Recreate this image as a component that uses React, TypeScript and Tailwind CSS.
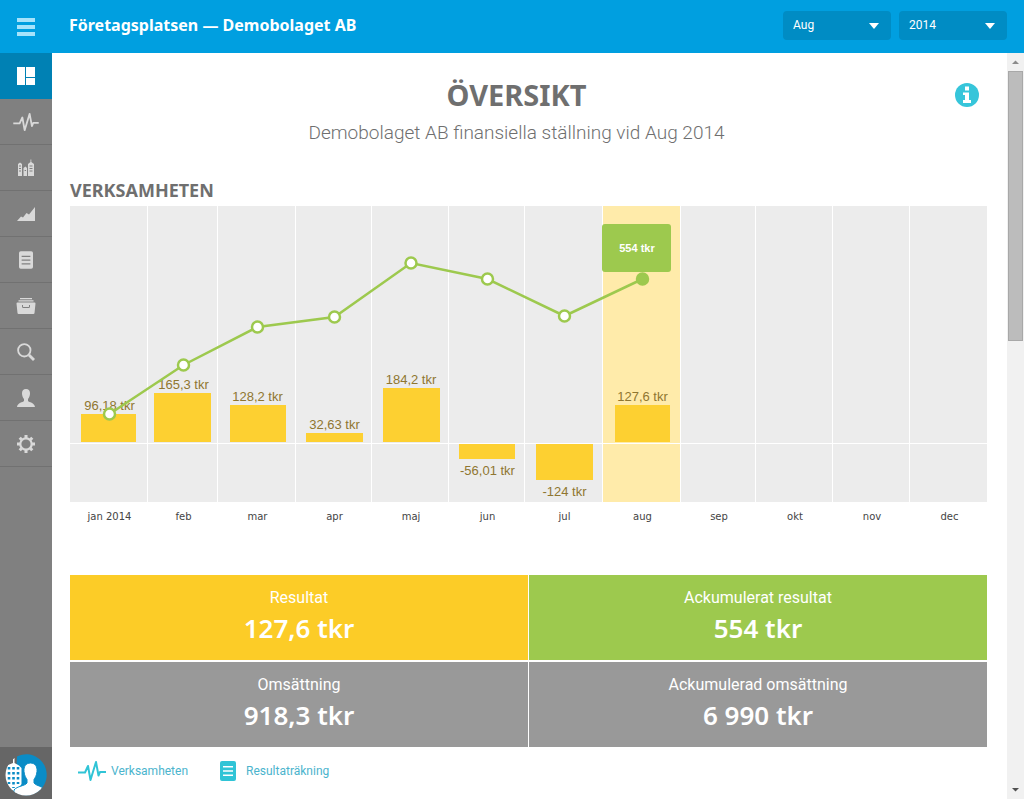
import { useState } from 'react';
import type { ReactNode } from 'react';
import clsx from 'clsx';

interface Month {
  name: string;
  start: number;
  end: number;
  result?: string;
  bar?: { x: number; y: number; width: number; height: number };
  total?: number;
}

const ZERO_Y = 237;
const PLOT_HEIGHT = 296;

const months: Month[] = [
  { name: 'jan 2014', start: 0, end: 77, result: '96,18 tkr', bar: { x: 11, y: 208, width: 55, height: 28 }, total: 208 },
  { name: 'feb', start: 78, end: 147, result: '165,3 tkr', bar: { x: 84, y: 187, width: 57, height: 49 }, total: 159 },
  { name: 'mar', start: 148, end: 225, result: '128,2 tkr', bar: { x: 160, y: 199, width: 56, height: 37 }, total: 121 },
  { name: 'apr', start: 226, end: 301, result: '32,63 tkr', bar: { x: 236, y: 227, width: 57, height: 9 }, total: 111 },
  { name: 'maj', start: 302, end: 378, result: '184,2 tkr', bar: { x: 313, y: 182, width: 57, height: 54 }, total: 57 },
  { name: 'jun', start: 379, end: 454, result: '-56,01 tkr', bar: { x: 389, y: 238, width: 56, height: 15 }, total: 73 },
  { name: 'jul', start: 455, end: 532, result: '-124 tkr', bar: { x: 466, y: 238, width: 57, height: 36 }, total: 110 },
  { name: 'aug', start: 533, end: 610, result: '127,6 tkr', bar: { x: 545, y: 199, width: 55, height: 37 }, total: 73 },
  { name: 'sep', start: 611, end: 685 },
  { name: 'okt', start: 686, end: 762 },
  { name: 'nov', start: 763, end: 839 },
  { name: 'dec', start: 840, end: 917 },
];

const center = (m: Month) => (m.start + m.end) / 2 + 1;

function PulseIcon({ className }: { className?: string }) {
  return (
    <svg viewBox="0 0 28 22" className={className} fill="none" stroke="currentColor" strokeWidth="2" strokeLinejoin="round" aria-hidden="true">
      <path d="M0 12.500H7L10 6L12.500 20L18 2L20.500 15.500L22 12H28" />
    </svg>
  );
}

function DocumentIcon({ className }: { className?: string }) {
  return (
    <svg viewBox="0 0 16 20" className={className} aria-hidden="true">
      <path
        fill="currentColor"
        fillRule="evenodd"
        d="M2 0H14A2 2 0 0 1 16 2V18A2 2 0 0 1 14 20H2A2 2 0 0 1 0 18V2A2 2 0 0 1 2 0ZM3 5V6.500H13V5ZM3 9.300V10.800H13V9.300ZM3 13.600V15.100H13V13.600Z"
      />
    </svg>
  );
}

const navItems: { label: string; icon: ReactNode }[] = [
  {
    label: 'Översikt',
    icon: (
      <svg viewBox="0 0 18 18" className="w-[18px] h-[18px]" fill="currentColor">
        <path d="M0 0H8V18H0ZM9 0H18V10H9ZM9 11H18V18H9Z" />
      </svg>
    ),
  },
  { label: 'Verksamheten', icon: <PulseIcon className="w-[26px] h-5" /> },
  {
    label: 'Bransch',
    icon: (
      <svg viewBox="0 0 18 18" className="w-[18px] h-[18px]" fill="currentColor">
        <path
          fillRule="evenodd"
          d="M1 17V5L3 3.500L5 5V17ZM6.500 17V9L8.500 7.500L10 9V17ZM11 17V5L13.500 3L13.500 0.500H14.300V3L17 5V17ZM2 6.500V7.500H4V6.500ZM2 9V10H4V9ZM2 11.500V12.500H4V11.500ZM12.500 6.500V7.500H15.500V6.500ZM12.500 9V10H15.500V9ZM12.500 11.500V12.500H15.500V11.500ZM7.600 11V12H9V11Z"
        />
      </svg>
    ),
  },
  {
    label: 'Utveckling',
    icon: (
      <svg viewBox="0 0 18 18" className="w-[18px] h-[18px]" fill="currentColor">
        <path d="M0 16L4 11.500L6 12.500L9.500 8L12 9.500L18 2V16Z" />
      </svg>
    ),
  },
  { label: 'Resultaträkning', icon: <DocumentIcon className="w-[14px] h-[18px]" /> },
  {
    label: 'Arkiv',
    icon: (
      <svg viewBox="0 0 20 18" className="w-5 h-[18px]" fill="currentColor">
        <path d="M4 1H16V2.200H4ZM2.500 3.200H17.500V4.500H2.500Z" />
        <path
          fillRule="evenodd"
          d="M0.500 6.500Q0.500 5.500 1.500 5.500H18.500Q19.500 5.500 19.500 6.500L18.500 16Q18.400 17 17.400 17H2.600Q1.600 17 1.500 16ZM6 8V9.500Q6 11 7.500 11H12.500Q14 11 14 9.500V8H13V9.500Q13 10 12.500 10H7.500Q7 10 7 9.500V8Z"
        />
      </svg>
    ),
  },
  {
    label: 'Sök',
    icon: (
      <svg viewBox="0 0 18 18" className="w-[18px] h-[18px]" fill="none" stroke="currentColor">
        <circle cx="7.300" cy="7.300" r="6.200" strokeWidth="1.800" />
        <path d="M12 12L17 17" strokeWidth="2.800" />
      </svg>
    ),
  },
  {
    label: 'Användare',
    icon: (
      <svg viewBox="0 0 18 18" className="w-[18px] h-[18px]" fill="currentColor">
        <path d="M9 0C11.700 0 13.200 2 13 4.800C12.900 7 12 9 11 10V12C12 13.400 17.500 13.600 18 18H0C0.500 13.600 6 13.400 7 12V10C6 9 5.100 7 5 4.800C4.800 2 6.300 0 9 0Z" />
      </svg>
    ),
  },
  {
    label: 'Inställningar',
    icon: (
      <svg viewBox="0 0 18 18" className="w-[18px] h-[18px]" fill="none" stroke="currentColor">
        <circle cx="9" cy="9" r="5.700" strokeWidth="2.200" />
        <path
          strokeWidth="3"
          d="M9 0V3M9 15V18M0 9H3M15 9H18M2.700 2.700L4.800 4.800M13.200 13.200L15.300 15.300M2.700 15.300L4.800 13.200M13.200 4.800L15.300 2.700"
        />
      </svg>
    ),
  },
];

const tiles = [
  { label: 'Resultat', value: '127,6 tkr', color: 'bg-[#fccc27]' },
  { label: 'Ackumulerat resultat', value: '554 tkr', color: 'bg-[#9dc94e]' },
  { label: 'Omsättning', value: '918,3 tkr', color: 'bg-[#999999]' },
  { label: 'Ackumulerad omsättning', value: '6 990 tkr', color: 'bg-[#999999]' },
];

interface PeriodSelectProps {
  label: string;
  value: string;
  options: string[];
  onChange: (value: string) => void;
}

function PeriodSelect({ label, value, options, onChange }: PeriodSelectProps) {
  return (
    <div className="relative">
      <select
        aria-label={label}
        value={value}
        onChange={(e) => onChange(e.target.value)}
        className="block appearance-none w-[108px] h-[29px] pl-[10px] pr-8 rounded-sm bg-[#008cc4] text-white text-[12px]"
      >
        {options.map((option) => (
          <option key={option}>{option}</option>
        ))}
      </select>
      <svg viewBox="0 0 10 6" className="absolute right-3 top-3 w-[10px] h-[6px] pointer-events-none" aria-hidden="true">
        <path d="M0 0H10L5 6Z" fill="#ffffff" />
      </svg>
    </div>
  );
}

function Sidebar() {
  const [active, setActive] = useState('Översikt');

  return (
    <aside className="flex flex-col justify-between w-[52px] shrink-0 bg-[#808080]">
      <nav className="flex flex-col">
        {navItems.map((item) => (
          <button
            key={item.label}
            type="button"
            aria-label={item.label}
            onClick={() => setActive(item.label)}
            className={clsx(
              'flex items-center justify-center h-[46px] border-b',
              active === item.label
                ? 'bg-[#0081b4] border-[#0081b4] text-white'
                : 'border-[#717171] text-[#d9d9d9]'
            )}
          >
            {item.icon}
          </button>
        ))}
      </nav>
      <button type="button" aria-label="Konto" className="h-[52px] bg-[#666666]">
        <svg viewBox="0 0 52 52" className="w-full h-full">
          <defs>
            <clipPath id="avatar">
              <circle cx="26" cy="28" r="20.500" />
            </clipPath>
          </defs>
          <path d="M17 9.500A20.500 20.500 0 1 1 15 45Z" fill="#0a8cc6" />
          <g clipPath="url(#avatar)">
            <path d="M13 11H14.500V16L19 18.500L21.500 21V37L16 46L5 38V21L8 18L13 16Z" fill="#ffffff" />
            <path
              d="M9 20V37M13.500 20V41M18 20V37"
              stroke="#0a8cc6"
              strokeWidth="2.600"
              strokeDasharray="2.600 2.400"
            />
            <path
              d="M30.500 16C35 16 37.500 19.500 37 24.500C36.700 28.500 35 31 34 32.500V36C36 39 43 39 45 43V52H14V43C17 39 25 39 27 36V32.500C26 31 24.300 28.500 24 24.500C23.500 19.500 26 16 30.500 16Z"
              fill="#ffffff"
              stroke="#0a8cc6"
              strokeWidth="1"
            />
          </g>
        </svg>
      </button>
    </aside>
  );
}

function ResultChart() {
  const withTotal = months.filter((m) => m.total !== undefined);
  const line = withTotal.map((m) => `${center(m)},${m.total}`).join(' ');

  return (
    <svg viewBox="0 0 917 320" className="block w-full" role="img" aria-label="Resultat per månad">
      {/* Kolumner */}
      {months.map((m) => (
        <rect
          key={m.name}
          x={m.start}
          y="0"
          width={m.end - m.start}
          height={PLOT_HEIGHT}
          fill={m.name === 'aug' ? '#ffebaa' : '#ececec'}
        />
      ))}
      <rect x="0" y={ZERO_Y} width="917" height="1" fill="#ffffff" />

      {/* Staplar */}
      {months.map((m) =>
        m.bar ? (
          <g key={m.name}>
            <rect {...m.bar} fill="#fdd031" />
            <text
              x={center(m)}
              y={m.bar.y < ZERO_Y ? m.bar.y - 4 : m.bar.y + m.bar.height + 16}
              textAnchor="middle"
              fill="#8f7630"
              className="font-['Liberation_Sans',sans-serif] text-[13px]"
            >
              {m.result}
            </text>
          </g>
        ) : null
      )}

      {/* Ackumulerat resultat */}
      <polyline points={line} fill="none" stroke="#9dc94e" strokeWidth="2.500" />
      {withTotal.map((m) => (
        <circle
          key={m.name}
          cx={center(m)}
          cy={m.total}
          r="5.500"
          fill={m.name === 'aug' ? '#9dc94e' : '#ffffff'}
          stroke="#9dc94e"
          strokeWidth="2.500"
        />
      ))}
      <rect x="532" y="18" width="69" height="48" rx="3" fill="#9dc94e" />
      <text
        x="567"
        y="46"
        textAnchor="middle"
        fill="#ffffff"
        className="font-['Liberation_Sans',sans-serif] text-[11px] font-bold"
      >
        554 tkr
      </text>

      {months.map((m) => (
        <text
          key={m.name}
          x={center(m)}
          y="314"
          textAnchor="middle"
          fill="#444444"
          className="font-['DejaVu_Sans',sans-serif] text-[10px]"
        >
          {m.name}
        </text>
      ))}
    </svg>
  );
}

function Scrollbar() {
  return (
    <div className="flex flex-col items-center w-[17px] shrink-0 bg-[#f1f1f1]" aria-hidden="true">
      <svg viewBox="0 0 17 18" className="w-[17px] h-[18px] shrink-0">
        <path d="M5 11L8.500 7.500L12 11Z" fill="#8b8b8b" />
      </svg>
      <div className="flex-1 w-full px-px">
        <div className="h-[38%] bg-[#bcbcbc] border border-[#a8a8a8]" />
      </div>
      <svg viewBox="0 0 17 18" className="w-[17px] h-[18px] shrink-0">
        <path d="M5 7L8.500 10.500L12 7Z" fill="#505050" />
      </svg>
    </div>
  );
}

export default function App() {
  const [month, setMonth] = useState('Aug');
  const [year, setYear] = useState('2014');

  return (
    <div className="flex flex-col h-screen bg-white font-['Roboto',sans-serif]">
      <header className="flex items-stretch h-[53px] shrink-0 pr-[17px] bg-[#009fe0] text-white">
        <button type="button" aria-label="Meny" className="flex items-center justify-center w-[52px]">
          <svg viewBox="0 0 18 18" className="w-[18px] h-[18px]" fill="#a6e3fb">
            <path d="M0 0H18V4H0ZM0 7H18V11H0ZM0 14H18V18H0Z" />
          </svg>
        </button>
        <div className="flex flex-1 items-center pb-[3px]">
          <h1 className="flex-1 pl-[17px] font-['Noto_Sans',sans-serif] text-[16px] leading-6 font-bold">
            Företagsplatsen — Demobolaget AB
          </h1>
          <div className="flex gap-2">
            <PeriodSelect label="Månad" value={month} options={['Jun', 'Jul', 'Aug']} onChange={setMonth} />
            <PeriodSelect label="År" value={year} options={['2012', '2013', '2014']} onChange={setYear} />
          </div>
        </div>
      </header>

      <div className="flex flex-1 min-h-0">
        <Sidebar />
        <main className="flex-1 min-w-0 overflow-hidden pl-[18px] pr-5 pt-6 text-[#6f6f6f]">
          <div className="flex items-start">
            <div className="flex-1 pl-2 text-center">
              <h2 className="font-['Noto_Sans',sans-serif] text-[29px] leading-9 font-bold">ÖVERSIKT</h2>
              <p className="pt-1 text-[19px] leading-8 font-light">
                Demobolaget AB finansiella ställning vid {month} {year}
              </p>
            </div>
            <button type="button" aria-label="Information" className="mt-[6px] mr-2">
              <svg viewBox="0 0 24 24" className="w-6 h-6">
                <circle cx="12" cy="12" r="12" fill="#36c5da" />
                <path d="M10 3.500H14V7.500H10ZM8 9.500H14V17H16V20H8V17H10V12H8Z" fill="#ffffff" />
              </svg>
            </button>
          </div>

          <h3 className="pt-[29px] pb-1 font-['Noto_Sans',sans-serif] text-[18px] leading-6 font-bold">VERKSAMHETEN</h3>
          <ResultChart />

          <div className="grid grid-cols-2 gap-x-px gap-y-[2px] mt-[49px] text-center text-white">
            {tiles.map((tile) => (
              <div key={tile.label} className={clsx('h-[85px] pt-[11px]', tile.color)}>
                <p className="text-[16px] leading-6">{tile.label}</p>
                <p className="font-['Noto_Sans',sans-serif] text-[26px] leading-9 font-semibold">{tile.value}</p>
              </div>
            ))}
          </div>

          <div className="flex items-center gap-8 pt-3 pl-2 text-[12px] leading-6 text-[#4bb4cd]">
            <a href="#verksamheten" className="flex items-center gap-[5px]">
              <PulseIcon className="w-7 h-[22px] text-[#30c4d6]" />
              Verksamheten
            </a>
            <a href="#resultatrakning" className="flex items-center gap-[10px]">
              <DocumentIcon className="w-4 h-5 text-[#30c4d6]" />
              Resultaträkning
            </a>
          </div>
        </main>
        <Scrollbar />
      </div>
    </div>
  );
}
